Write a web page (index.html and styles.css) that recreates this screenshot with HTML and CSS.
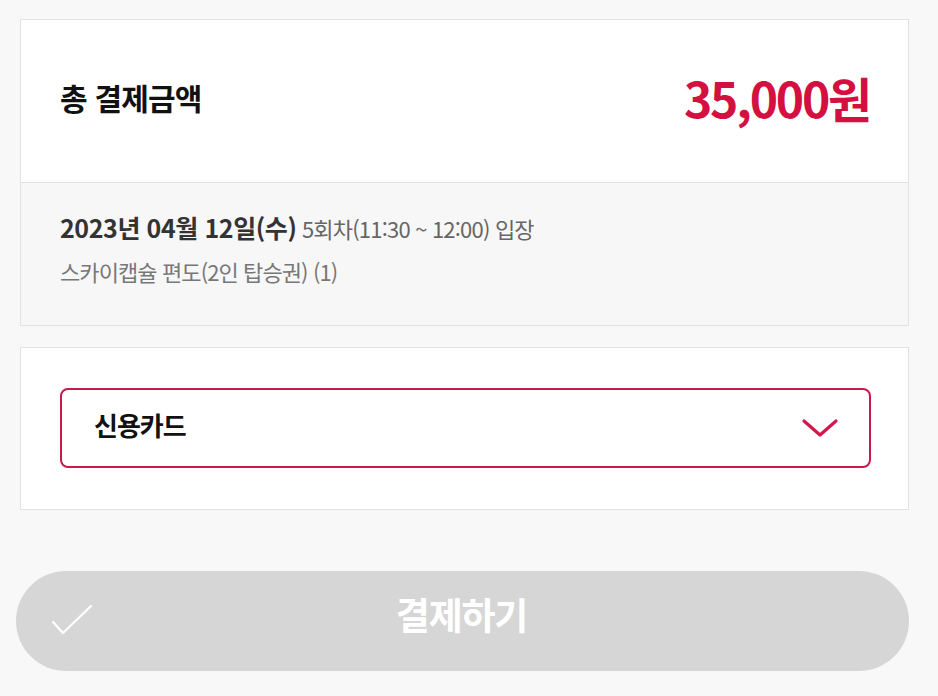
FILE: index.html
```html
<!DOCTYPE html>
<html lang="ko">
<head>
<meta charset="utf-8">
<link rel="stylesheet" href="styles.css">
</head>
<body>
<div class="page">
  <section class="card summary">
    <div class="total">
      <span class="total-label">총 결제금액</span>
      <span class="total-price">35,000원</span>
    </div>
    <div class="detail">
      <p class="when"><strong>2023년 04월 12일(수)</strong> <span>5회차(11:30 ~ 12:00) 입장</span></p>
      <p class="item">스카이캡슐 편도(2인 탑승권) (1)</p>
    </div>
  </section>
  <section class="card method">
    <div class="select">
      <span class="select-text">신용카드</span>
      <svg class="chevron" width="38" height="22" viewBox="0 0 38 22"><path d="M3 4 L19 18 L35 4" fill="none" stroke="#d3174a" stroke-width="3.2" stroke-linecap="round" stroke-linejoin="round"/></svg>
    </div>
  </section>
  <button class="pay">
    <svg class="check" width="44" height="34" viewBox="0 0 44 34"><path d="M3 19 L13 30 L41 3" fill="none" stroke="#fff" stroke-width="2.2" stroke-linecap="round" stroke-linejoin="round"/></svg>
    <span class="pay-text">결제하기</span>
  </button>
</div>
</body>
</html>
```
FILE: styles.css
```css
* { box-sizing: border-box; }
html, body { margin: 0; padding: 0; background: #f8f8f8; }
body {
  font-family: "Noto Sans CJK KR", "Noto Sans", sans-serif;
  width: 938px;
  height: 696px;
  overflow: hidden;
}
.page {
  padding: 19px 29px 0 16px;
  display: flex;
  flex-direction: column;
}
.card {
  margin-left: 4px;
  border: 1px solid #e2e2e2;
  background: #fff;
}
.total {
  height: 163px;
  display: flex;
  align-items: center;
  justify-content: space-between;
  padding: 0 38px 8px 39px;
  border-bottom: 1px solid #e2e2e2;
}
.total-label {
  font-size: 30px;
  font-weight: 700;
  color: #111;
  letter-spacing: -0.8px;
}
.total-price {
  font-size: 48px;
  font-weight: 700;
  color: #d3103f;
  letter-spacing: -2.2px;
}
.detail {
  background: #f7f7f7;
  height: 142px;
  padding: 28px 39px 0;
}
.detail p { margin: 0; }
.when {
  color: #333;
  font-size: 22px;
  line-height: 32px;
  letter-spacing: -0.8px;
}
.when strong {
  font-size: 25px;
  font-weight: 700;
  color: #333;
  letter-spacing: -0.4px;
}
.when span { color: #666; }
.item {
  margin-top: 12px !important;
  font-size: 22px;
  line-height: 30px;
  color: #777;
  letter-spacing: -0.9px;
}
.method {
  margin-top: 21px;
  height: 163px;
  padding: 40px 37px 0 39px;
}
.select {
  height: 80px;
  border: 2px solid #c81a4b;
  border-radius: 8px;
  display: flex;
  align-items: center;
  justify-content: space-between;
  padding: 0 30px 0 32px;
}
.select-text {
  font-size: 26px;
  font-weight: 700;
  color: #111;
  letter-spacing: -1px;
  margin-top: -8px;
}
.chevron { display: block; }
.pay {
  margin-top: 61px;
  height: 100px;
  border: 0;
  border-radius: 50px;
  background: #d6d6d6;
  position: relative;
  display: flex;
  align-items: center;
  justify-content: center;
  font-family: inherit;
  padding: 0;
}
.check {
  position: absolute;
  left: 34px;
  top: 32px;
}
.pay-text {
  font-size: 37px;
  font-weight: 700;
  color: #fff;
  letter-spacing: -1.2px;
  margin: -14px 0 0 -2px;
}
```
